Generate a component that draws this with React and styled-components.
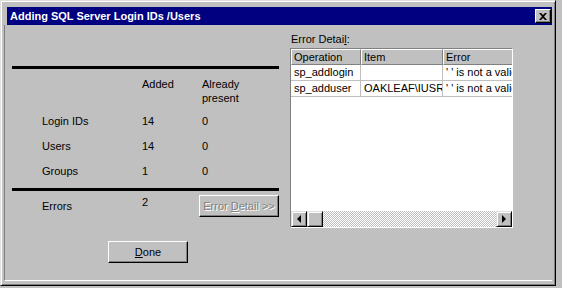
import { Fragment } from "react";
import styled, { createGlobalStyle } from "styled-components";

const GlobalStyle = createGlobalStyle`
    html, body {
        margin: 0;
        background: #c0c0c0;
    }
    body {
        font-family: "Liberation Sans", Arial, sans-serif;
        font-size: 11px;
        color: #000;
    }
`;

const Window = styled.div`
    box-sizing: border-box;
    width: 556px;
    height: 286px;
    padding: 3px;
    background: #c0c0c0;
    border: 1px solid;
    border-color: #dfdfdf #000 #000 #dfdfdf;
    box-shadow: inset 1px 1px #fff, inset -1px -1px #808080;
    display: flex;
    flex-direction: column;
`;

const TitleBar = styled.div`
    height: 18px;
    margin: 3px 0 0 3px;
    padding: 0 1px 0 3px;
    background: #000080;
    color: #fff;
    font-weight: bold;
    display: flex;
    align-items: center;
    justify-content: space-between;
`;

const CloseButton = styled.div`
    box-sizing: border-box;
    width: 16px;
    height: 14px;
    background: #c0c0c0;
    border: 1px solid;
    border-color: #fff #000 #000 #fff;
    box-shadow: inset -1px -1px #808080;
    display: flex;
    align-items: center;
    justify-content: center;
`;

const Client = styled.div`
    flex: 1;
    margin-bottom: 1px;
    border-left: 1px solid #808080;
    border-bottom: 1px solid #fff;
    display: flex;
`;

const LeftPane = styled.div`
    width: 267px;
    padding: 41px 0 0 7px;
`;

const ThickRule = styled.div`
    height: 3px;
    margin-top: ${(p) => p.$top || 0}px;
    background: #000;
`;

const StatsGrid = styled.div`
    display: grid;
    grid-template-columns: 100px 60px 1fr;
    padding-left: 30px;
    margin-top: ${(p) => p.$top || 0}px;
`;

const Cell = styled.div`
    height: ${(p) => p.$h || 25}px;
    display: flex;
    align-items: ${(p) => (p.$top ? "flex-start" : "center")};
    line-height: 14px;
`;

const HeadCell = styled.div`
    height: 31px;
    line-height: 14px;
`;

const Button = styled.button`
    box-sizing: border-box;
    width: ${(p) => p.$w}px;
    height: 22px;
    padding: 0;
    font: inherit;
    color: ${(p) => (p.disabled ? "#808080" : "#000")};
    text-shadow: ${(p) => (p.disabled ? "1px 1px #fff" : "none")};
    background: #c0c0c0;
    border: 1px solid;
    border-color: #fff #000 #000 #fff;
    box-shadow: inset -1px -1px #808080;
    margin-left: ${(p) => p.$left || 0}px;
    margin-top: ${(p) => p.$top || 0}px;
    display: block;
`;

const Key = styled.span`
    text-decoration: underline;
`;

const RightPane = styled.div`
    padding: 8px 0 0 11px;
`;

const Label = styled.div`
    height: 13px;
    line-height: 13px;
    margin-left: 1px;
    margin-bottom: 2px;
`;

const ListView = styled.div`
    box-sizing: border-box;
    width: 223px;
    height: 180px;
    background: #fff;
    border: 1px solid;
    border-color: #808080 #fff #fff #808080;
    display: flex;
    flex-direction: column;
    overflow: hidden;
`;

const Table = styled.div`
    flex: 1;
    display: grid;
    grid-template-columns: 70px 82px 90px;
    grid-auto-rows: 16px;
    align-content: start;
    overflow: hidden;
`;

const HeaderCell = styled.div`
    box-sizing: border-box;
    background: #c0c0c0;
    border: 1px solid;
    border-color: #fff #808080 #808080 #fff;
    padding-left: 2px;
    line-height: 14px;
    white-space: nowrap;
    overflow: hidden;
`;

const DataCell = styled.div`
    box-sizing: border-box;
    border-right: 1px solid #c0c0c0;
    border-bottom: 1px solid #c0c0c0;
    padding-left: 3px;
    line-height: 15px;
    white-space: nowrap;
    overflow: hidden;
`;

const ScrollBar = styled.div`
    height: 16px;
    display: flex;
    background: repeating-conic-gradient(#c0c0c0 0 25%, #fff 0 50%) 0 0 / 2px 2px;
`;

const ScrollButton = styled.div`
    box-sizing: border-box;
    width: 16px;
    height: 16px;
    background: #c0c0c0;
    border: 1px solid;
    border-color: #dfdfdf #000 #000 #dfdfdf;
    box-shadow: inset 1px 1px #fff, inset -1px -1px #808080;
    display: flex;
    align-items: center;
    justify-content: center;
    margin-left: ${(p) => (p.$end ? "auto" : 0)};
`;

const stats = [
    { label: "Login IDs", added: 14, present: 0 },
    { label: "Users", added: 14, present: 0 },
    { label: "Groups", added: 1, present: 0 },
];

const errors = [
    { op: "sp_addlogin", item: "", error: "' ' is not a valid login" },
    { op: "sp_adduser", item: "OAKLEAF\\IUSR_OAKLEAF", error: "' ' is not a valid user" },
];

function Arrow({ dir }) {
    const pts = dir === "left" ? "4,0 0,4 4,8" : "0,0 4,4 0,8";
    return (
        <svg width="4" height="8" viewBox="0 0 4 8">
            <polygon points={pts} fill="#000" />
        </svg>
    );
}

export default function App() {
    return (
        <>
            <GlobalStyle />
            <Window>
                <TitleBar>
                    <span>Adding SQL Server Login IDs /Users</span>
                    <CloseButton>
                        <svg width="8" height="7" viewBox="0 0 8 7">
                            <path d="M0 0h2l2 2 2-2h2L5 3.5 8 7H6L4 5 2 7H0l3-3.5z" fill="#000" />
                        </svg>
                    </CloseButton>
                </TitleBar>
                <Client>
                    <LeftPane>
                        <ThickRule />
                        <StatsGrid $top={8}>
                            <HeadCell />
                            <HeadCell>Added</HeadCell>
                            <HeadCell>
                                Already
                                <br />
                                present
                            </HeadCell>
                            {stats.map((s) => (
                                <Fragment key={s.label}>
                                    <Cell>{s.label}</Cell>
                                    <Cell>{s.added}</Cell>
                                    <Cell>{s.present}</Cell>
                                </Fragment>
                            ))}
                        </StatsGrid>
                        <ThickRule $top={5} />
                        <StatsGrid $top={4}>
                            <Cell $h={22}>Errors</Cell>
                            <Cell $h={22} $top>
                                2
                            </Cell>
                            <Button $w={80} $left={-3} disabled>
                                Error <Key>D</Key>etail &gt;&gt;
                            </Button>
                        </StatsGrid>
                        <Button $w={80} $left={96} $top={24}>
                            <Key>D</Key>one
                        </Button>
                    </LeftPane>
                    <RightPane>
                        <Label>
                            Error Detai<Key>l</Key>:
                        </Label>
                        <ListView>
                            <Table>
                                <HeaderCell>Operation</HeaderCell>
                                <HeaderCell>Item</HeaderCell>
                                <HeaderCell>Error</HeaderCell>
                                {errors.map((e) => (
                                    <Fragment key={e.op}>
                                        <DataCell>{e.op}</DataCell>
                                        <DataCell>{e.item}</DataCell>
                                        <DataCell>{e.error}</DataCell>
                                    </Fragment>
                                ))}
                            </Table>
                            <ScrollBar>
                                <ScrollButton>
                                    <Arrow dir="left" />
                                </ScrollButton>
                                <ScrollButton />
                                <ScrollButton $end>
                                    <Arrow dir="right" />
                                </ScrollButton>
                            </ScrollBar>
                        </ListView>
                    </RightPane>
                </Client>
            </Window>
        </>
    );
}
